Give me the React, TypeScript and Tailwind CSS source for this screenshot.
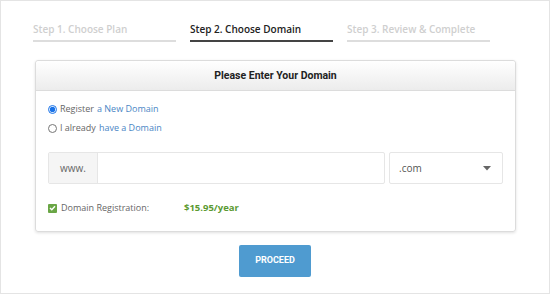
import React, { useState } from "react";

const steps = [
  { label: "Step 1. Choose Plan", active: false },
  { label: "Step 2. Choose Domain", active: true },
  { label: "Step 3. Review & Complete", active: false },
];

export default function App() {
  const [mode, setMode] = useState("register");
  const [domain, setDomain] = useState("");

  return (
    <div className="w-[550px] h-[294px] border border-[#e4e4e4] bg-white font-['Open_Sans',sans-serif] overflow-hidden">
      {/* steps */}
      <div className="flex gap-[14px] pl-[32px] pt-[20px]">
        {steps.map((s) => (
          <div
            key={s.label}
            className={
              s.active
                ? "w-[143px] pb-[3px] border-b-2 border-[#444] text-[10px] font-semibold whitespace-nowrap text-[#222] leading-[16px]"
                : "w-[143px] pb-[3px] border-b-2 border-[#ddd] text-[10px] font-semibold whitespace-nowrap text-[#cfcfcf] leading-[16px]"
            }
          >
            {s.label}
          </div>
        ))}
      </div>

      {/* card */}
      <div className="ml-[34px] mt-[18px] w-[481px] border border-[#dcdcdc] rounded-[3px] shadow-[0_1px_3px_rgba(0,0,0,0.12)]">
        <div className="h-[30px] flex items-center justify-center bg-gradient-to-b from-white to-[#ececec] border-b border-[#dcdcdc] rounded-t-[3px] font-['Roboto',sans-serif] font-bold text-[10.5px] text-[#222]">
          Please Enter Your Domain
        </div>
        <div className="px-[12px] pt-[9px] pb-[16px]">
          <label className="flex items-center h-[18px] text-[9px] text-[#666] cursor-pointer">
            <input
              type="radio"
              name="mode"
              checked={mode === "register"}
              onChange={() => setMode("register")}
              className="w-[9px] h-[9px] m-0 mr-[3px] accent-[#1a73e8]"
            />
            Register <span className="text-[#4a86c5] ml-[3px]">a New Domain</span>
          </label>
          <label className="flex items-center h-[18px] mt-[1px] text-[9px] text-[#666] cursor-pointer">
            <input
              type="radio"
              name="mode"
              checked={mode === "existing"}
              onChange={() => setMode("existing")}
              className="w-[9px] h-[9px] m-0 mr-[3px]"
            />
            I already <span className="text-[#4a86c5] ml-[3px]">have a Domain</span>
          </label>

          <div className="flex gap-[4px] mt-[15px] h-[32px]">
            <div className="flex flex-1 border border-[#e6e6e6] rounded-[2px]">
              <div className="w-[49px] flex items-center justify-center bg-[#f5f5f5] border-r border-[#e6e6e6] text-[10px] text-[#666]">
                www.
              </div>
              <input
                value={domain}
                onChange={(e) => setDomain(e.target.value)}
                className="flex-1 outline-none px-2 text-[10px]"
              />
            </div>
            <div className="w-[114px] flex items-center justify-between border border-[#e6e6e6] rounded-[2px] pl-[9px] pr-[11px] text-[10px] text-[#555]">
              <span>.com</span>
              <svg width="8" height="5" viewBox="0 0 8 5">
                <path d="M0 0h8L4 4.5z" fill="#666" />
              </svg>
            </div>
          </div>

          <div className="flex items-center mt-[17px] h-[14px]">
            <span className="w-[9px] h-[9px] bg-[#6aa646] rounded-[1px] flex items-center justify-center">
              <svg width="7" height="6" viewBox="0 0 7 6">
                <path d="M1 3l1.8 1.8L6 1.2" stroke="#fff" strokeWidth="1.4" fill="none" />
              </svg>
            </span>
            <span className="ml-[4px] w-[123px] text-[9px] text-[#666]">Domain Registration:</span>
            <span className="text-[9.5px] font-bold text-[#5b9a32]">$15.95/year</span>
          </div>
        </div>
      </div>

      <div className="flex justify-center mt-[13px]">
        <button className="w-[72px] h-[32px] bg-[#4f9bd0] rounded-[2px] text-white font-['Roboto',sans-serif] font-bold text-[9px]">
          PROCEED
        </button>
      </div>
    </div>
  );
}
